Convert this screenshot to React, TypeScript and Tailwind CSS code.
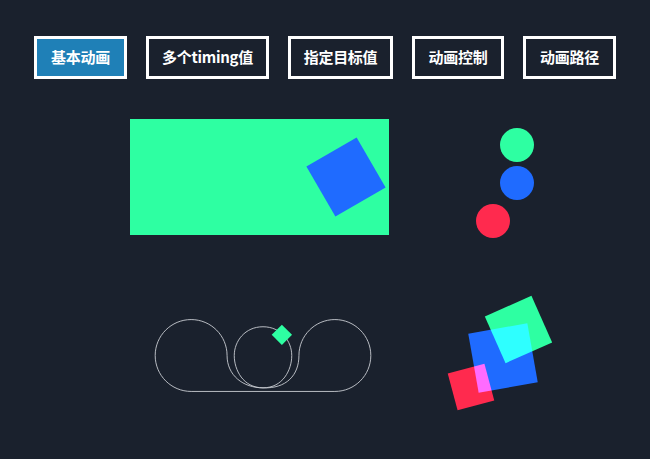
const tabs = [
    { label: '基本动画', width: 'w-[93px]' },
    { label: '多个timing值', width: 'w-[123px]' },
    { label: '指定目标值', width: 'w-[105px]' },
    { label: '动画控制', width: 'w-[92px]' },
    { label: '动画路径', width: 'w-[93px]' },
];

const motionPath =
  'M8,56 C8,33.90861 25.90861,16 48,16 C70.09139,16 88,33.90861 88,56 C88,78.09139 105.90861,92 128,92 C150.09139,92 160,72 160,56 C160,40 148,24 128,24 C108,24 96,40 96,56 C96,72 105.90861,92 128,92 C154,93 168,78 168,56 C168,33.90861 185.90861,16 208,16 C230.09139,16 248,33.90861 248,56 C248,78.09139 230.09139,96 208,96 L48,96 C25.90861,96 8,78.09139 8,56 Z';

function TabButton({ label, width, active }: { label: string; width: string; active: boolean }) {
    return (
        <button
            type="button"
            className={[
                'flex h-[43px] items-center justify-center border-[3px] border-white text-[15px] font-bold tracking-[-0.3px] text-white',
                width,
                active ? 'bg-[#1f80b7]' : 'bg-[#1a212d]',
            ].join(' ')}
        >
            {label}
        </button>
    );
}

export default function App() {
    return (
        <div
            className="flex h-[459px] w-full flex-col overflow-hidden bg-[#1a212d]"
            style={{ fontFamily: '"Noto Sans CJK SC", "Noto Sans", sans-serif' }}
        >
            <div className="flex justify-center gap-[19px] pt-[36px]">
                {tabs.map((tab, index) => (
                    <TabButton key={tab.label} label={tab.label} width={tab.width} active={index === 0} />
                ))}
            </div>

            <div className="mt-[40px] flex items-start pl-[130px]">
                <div className="relative h-[116px] w-[259px] bg-[#2effa2]">
                    <div className="absolute left-[187px] top-[29px] h-[58px] w-[58px] rotate-[-30deg] bg-[#1f6bff]" />
                </div>
                <div className="ml-[87px] flex flex-col items-end gap-[4px] pt-[9px]">
                    <div className="h-[34px] w-[34px] rounded-full bg-[#2effa2]" />
                    <div className="h-[34px] w-[34px] rounded-full bg-[#1f6bff]" />
                    <div className="mr-[24px] h-[34px] w-[34px] rounded-full bg-[#ff2a4e]" />
                </div>
            </div>

            <div className="mt-[52px] flex items-start pl-[148px]">
                <svg width="230" height="101" viewBox="0 0 256 112" className="mt-[15px]">
                    <path d={motionPath} fill="none" stroke="#c9cdd3" strokeWidth="1" />
                    <rect
                        x="141"
                        y="25"
                        width="16"
                        height="16"
                        fill="#2effa2"
                        transform="rotate(45 149 33)"
                    />
                </svg>
                <div className="relative isolate ml-[62px] h-[125px] w-[120px]">
                    <div className="absolute left-[53px] top-[14px] h-[51px] w-[51px] rotate-[-24deg] bg-[#2effa2]" />
                    <div className="absolute left-[33px] top-[38px] h-[60px] w-[60px] rotate-[-10deg] bg-[#1f6bff] mix-blend-lighten" />
                    <div className="absolute left-[12px] top-[78px] h-[38px] w-[38px] rotate-[-15deg] bg-[#ff2a4e] mix-blend-lighten" />
                </div>
            </div>
        </div>
    );
}
